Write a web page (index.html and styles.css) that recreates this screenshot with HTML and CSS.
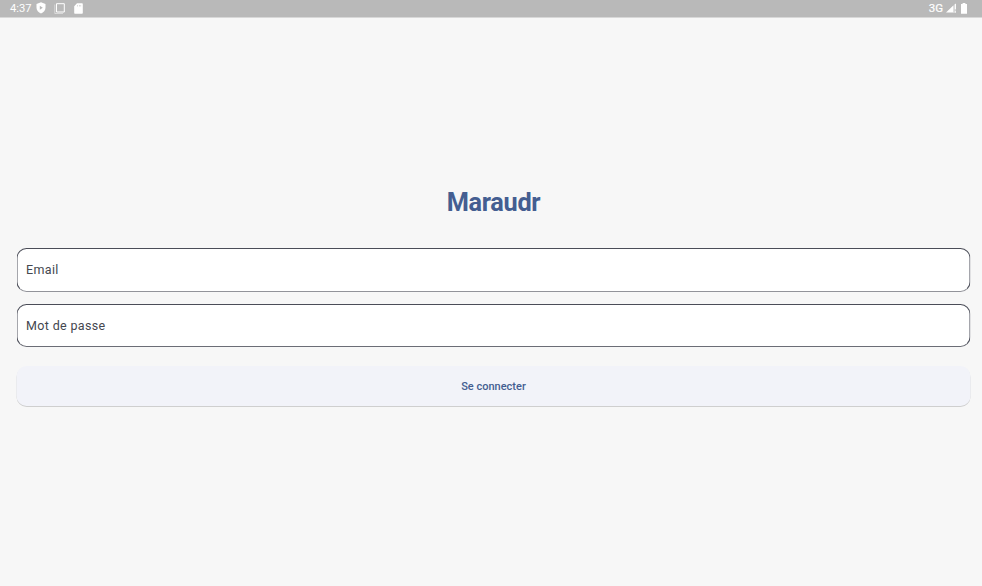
FILE: index.html
```html
<!DOCTYPE html>
<html lang="fr">
<head>
<meta charset="utf-8">
<title>Maraudr</title>
<link rel="stylesheet" href="styles.css">
</head>
<body>
<header class="status-bar">
  <div class="status-left">
    <span class="clock">4:37</span>
    <svg class="shield" width="10" height="12" viewBox="0 0 10 12"><path fill="#fff" fill-rule="evenodd" d="M5 .3 9.500 1.900v3.900c0 2.600-1.900 4.700-4.500 5.800C2.400 10.500.5 8.400.5 5.800V1.900ZM3.800 3.800v4L6.800 5.800Z"/></svg>
    <svg class="frames" width="11" height="11" viewBox="0 0 11 11" fill="none" stroke="#fff"><path d="M2.500.7h7.800v8.300H2.500z"/><path opacity=".45" d="M.8 1.500v9H9"/></svg>
    <svg class="sd" width="9" height="11" viewBox="0 0 9 11"><path fill="#fff" fill-rule="evenodd" d="M3 .3h5q.8 0 .8.7v9q0 .7-.8.7H.9q-.7 0-.7-.7V3.300ZM3.400 1.900v1.500h.5V1.900ZM5 1.900v1.500h.5V1.900ZM6.600 1.900v1.500h.5V1.900Z"/></svg>
  </div>
  <div class="status-right">
    <span class="network">3G</span>
    <svg class="signal" width="11" height="10" viewBox="0 0 11 10"><path fill="#fff" opacity=".35" d="M10 0v10H7V3Z"/><path fill="#fff" d="M0 9.600 7.300 2.400v7.200ZM8.800 1h1.100v5.300H8.800zM8.800 8.200h1.100v1.400H8.800z"/></svg>
    <svg class="battery" width="6" height="11" viewBox="0 0 6 11"><path fill="#fff" d="M1.600 0h2.800v1.100H6v9.600H0V1.100h1.600Z"/></svg>
  </div>
</header>
<main class="login">
  <h1 class="title">Maraudr</h1>
  <div class="field email">Email</div>
  <div class="field password">Mot de passe</div>
  <button class="submit" type="button">Se connecter</button>
</main>
</body>
</html>
```
FILE: styles.css
```css
* { box-sizing: border-box; }
body {
  margin: 0;
  height: 586px;
  background: #f7f7f7;
  font-family: Roboto, sans-serif;
  overflow: hidden;
}
.status-bar {
  display: flex;
  justify-content: space-between;
  height: 18px;
  padding: 0 15px 0 10px;
  background: linear-gradient(#b9b9b9 17px, #d8d8d8 17px);
  color: #fff;
  font-size: 11.200px;
  line-height: 17px;
}
.status-left, .status-right { display: flex; align-items: center; height: 16px; }
.clock { width: 26px; }
.frames { margin-left: 8px; }
.sd { margin-left: 8.500px; }
.network { font-size: 11.500px; }
.network { -webkit-text-stroke: .2px #fff; }
.signal { margin-left: 3px; }
.battery { margin-left: 4px; }
.login {
  display: flex;
  flex-direction: column;
  padding: 167px 12px 0 16px;
}
.title {
  margin: 0 0 28px;
  padding-left: 1px;
  color: #445e91;
  font-size: 25.300px;
  letter-spacing: -.3px;
  line-height: 35px;
  font-weight: 700;
  text-align: center;
}
.field {
  display: flex;
  align-items: center;
  height: 44px;
  padding: 0 0 2px 8.500px;
  border: 1px solid #4b4d58;
  border-radius: 10px;
  background: #fff;
  color: #44474f;
  font-size: 12.500px;
  letter-spacing: .35px;
  transform: translateX(.5px);
}
.email { margin-bottom: 12px; border-bottom-color: #92939a; }
.password { height: 43px; margin-bottom: 19px; padding-bottom: 0; border-bottom-color: #6b6d76; }
.submit {
  height: 40px;
  padding: 2px 0 0;
  border: 0;
  border-radius: 10px;
  background: #f2f3f9;
  box-shadow: 0 1px .500px rgba(0, 0, 0, .16);
  color: #445e91;
  font: 500 11px/16px Roboto, sans-serif;
  transform: translateX(.5px);
}
```
